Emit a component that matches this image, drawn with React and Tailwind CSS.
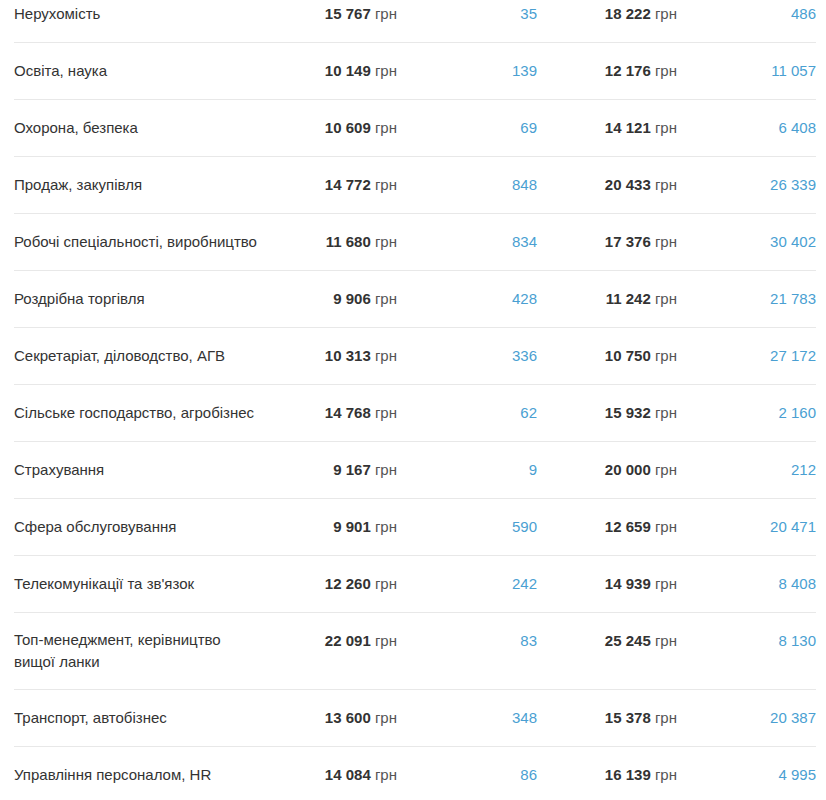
import React from "react";

const rows = [
  ["Нерухомість", "15 767", "35", "18 222", "486"],
  ["Освіта, наука", "10 149", "139", "12 176", "11 057"],
  ["Охорона, безпека", "10 609", "69", "14 121", "6 408"],
  ["Продаж, закупівля", "14 772", "848", "20 433", "26 339"],
  ["Робочі спеціальності, виробництво", "11 680", "834", "17 376", "30 402"],
  ["Роздрібна торгівля", "9 906", "428", "11 242", "21 783"],
  ["Секретаріат, діловодство, АГВ", "10 313", "336", "10 750", "27 172"],
  ["Сільське господарство, агробізнес", "14 768", "62", "15 932", "2 160"],
  ["Страхування", "9 167", "9", "20 000", "212"],
  ["Сфера обслуговування", "9 901", "590", "12 659", "20 471"],
  ["Телекомунікації та зв'язок", "12 260", "242", "14 939", "8 408"],
  ["Топ-менеджмент, керівництво вищої ланки", "22 091", "83", "25 245", "8 130"],
  ["Транспорт, автобізнес", "13 600", "348", "15 378", "20 387"],
  ["Управління персоналом, HR", "14 084", "86", "16 139", "4 995"],
];

function Salary({ v }) {
  return (
    <div className="text-right leading-[24px]">
      <span className="font-bold text-[#333]">{v}</span>
      <span className="text-[#555]"> грн</span>
    </div>
  );
}

export default function App() {
  return (
    <div
      className="w-[826px] h-[800px] overflow-hidden bg-white text-[15px] text-[#333]"
      style={{ fontFamily: '"Liberation Sans", Arial, sans-serif' }}
    >
      <div className="ml-[14px] w-[802px] -mt-[14px]">
        {rows.map((r, i) => (
          <div
            key={i}
            className="grid grid-cols-[248px_135px_140px_140px_139px] items-start py-[16px] border-b border-[#e8e8e8]"
          >
            <div className="self-center text-[#333] leading-[22px]">{r[0]}</div>
            <Salary v={r[1]} />
            <div className="text-right leading-[24px] text-[#4a9fd2]">{r[2]}</div>
            <Salary v={r[3]} />
            <div className="text-right leading-[24px] text-[#4a9fd2]">{r[4]}</div>
          </div>
        ))}
      </div>
    </div>
  );
}
